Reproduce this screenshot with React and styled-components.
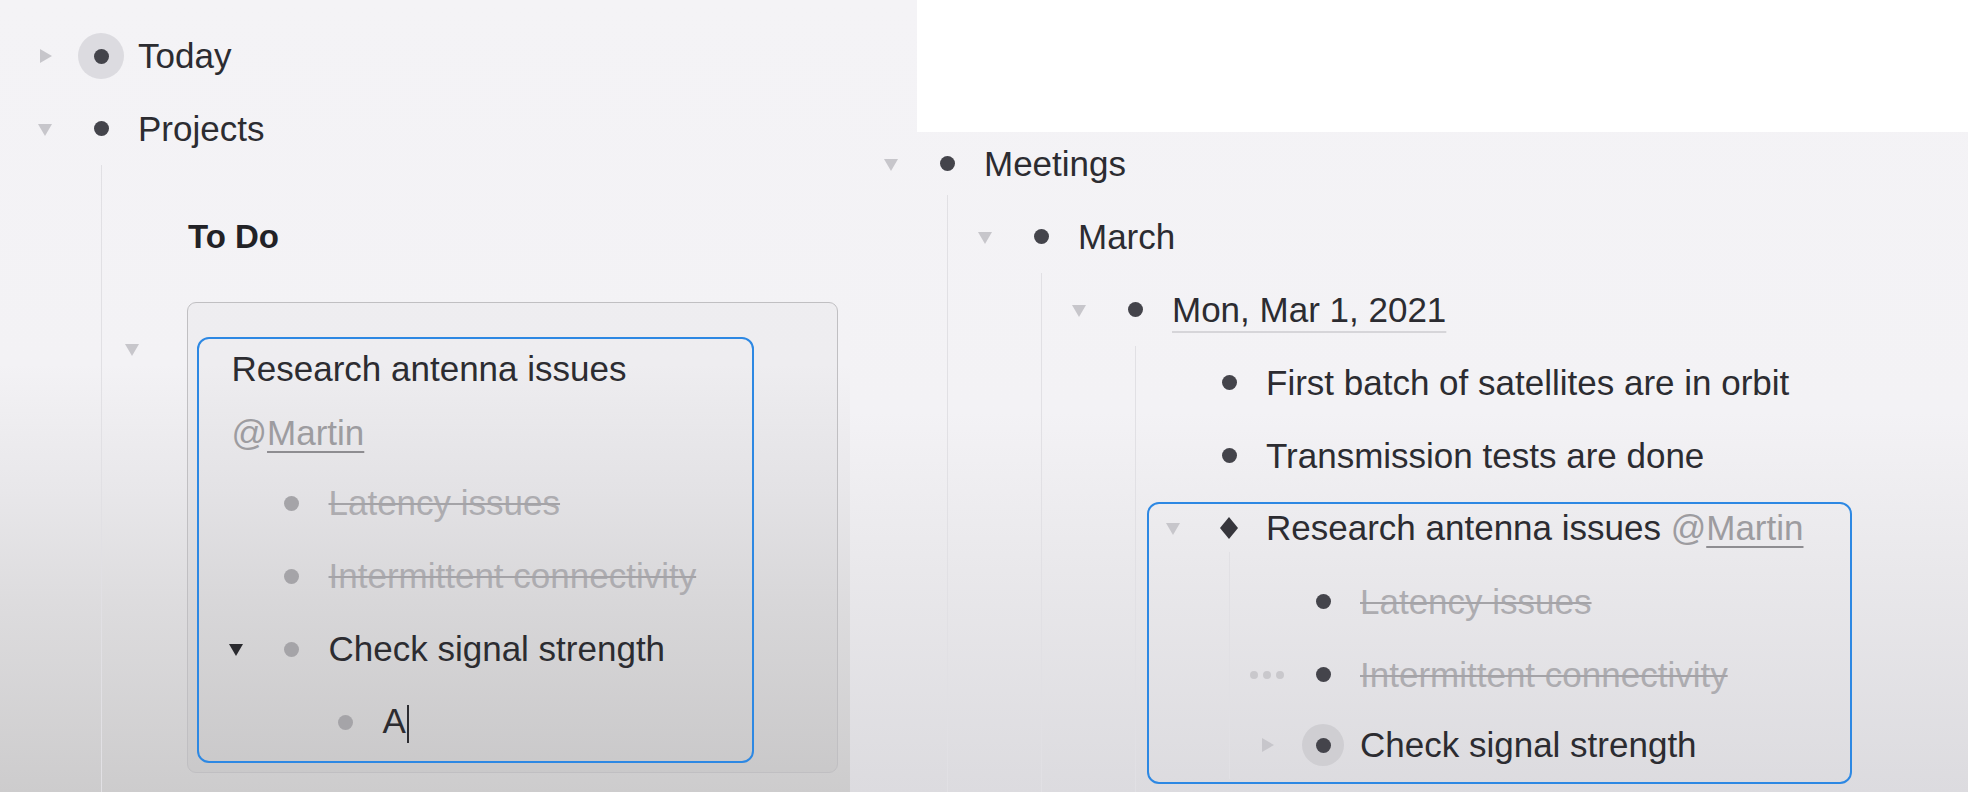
import React from 'react';
import styled, { createGlobalStyle } from 'styled-components';

const GlobalStyle = createGlobalStyle`
  html, body {
    margin: 0;
    padding: 0;
    background: #f4f3f6;
  }
  body {
    font-family: "Liberation Sans", Arial, sans-serif;
    -webkit-font-smoothing: antialiased;
  }
`

const Screen = styled.div`
  display: flex;
  width: 1968px;
  height: 792px;
  overflow: hidden;
`

const LeftPane = styled.div`
  width: 850px;
  flex-shrink: 0;
  display: flex;
  flex-direction: column;
  padding: 20px 0 0 31px;
  box-sizing: border-box;
  background: linear-gradient(180deg, #f4f3f6 0%, #f3f2f5 46%, #e8e7ea 62%, #dddcde 76%, #cdcccd 100%);
`

const RightPane = styled.div`
  flex: 1;
  display: flex;
  flex-direction: column;
  background: linear-gradient(180deg, #f4f3f6 0%, #f3f2f5 52%, #e9e8eb 72%, #dcdbdf 100%);
`

const WhiteBlock = styled.div`
  margin-left: 67px;
  height: 132px;
  flex-shrink: 0;
  background: #ffffff;
`

const Outline = styled.div`
  flex: 1;
  display: flex;
  flex-direction: column;
  padding-left: ${p => p.$x}px;
`

const Row = styled.div`
  display: flex;
  align-items: center;
  height: ${p => p.$h || 73}px;
  padding-left: ${p => p.$pl || 0}px;
  flex-shrink: 0;
`

const ToggleSlot = styled.div`
  width: 28px;
  height: 28px;
  display: flex;
  align-items: center;
  justify-content: center;
  flex-shrink: 0;
`

const BulletSlot = styled.div`
  width: 28px;
  height: 28px;
  margin-left: 28px;
  display: flex;
  align-items: center;
  justify-content: center;
  flex-shrink: 0;
  position: relative;
`

const Dot = styled.span`
  width: 15px;
  height: 15px;
  border-radius: 50%;
  background: ${p => p.$color || '#44444b'};
  position: relative;
`

const Halo = styled.span`
  position: absolute;
  left: 50%;
  top: 50%;
  width: ${p => p.$size || 46}px;
  height: ${p => p.$size || 46}px;
  transform: translate(-50%, -50%);
  border-radius: 50%;
  background: ${p => p.$color || '#dcdbe0'};
`

const Label = styled.span`
  margin-left: 23px;
  font-size: 35px;
  line-height: 40px;
  white-space: nowrap;
  color: ${p => (p.$done ? '#adacb0' : '#2c2c31')};
  text-decoration: ${p => (p.$done ? 'line-through' : 'none')};
  text-decoration-color: #a4a3a7;
  text-decoration-thickness: 2px;
`

const DateTag = styled.span`
  text-decoration: underline;
  text-decoration-color: #d6d5d9;
  text-decoration-thickness: 2px;
  text-underline-offset: 9px;
`

const Mention = styled.span`
  color: #9d9ca0;
`

const MentionName = styled.span`
  text-decoration: underline;
  text-decoration-color: #8e8d91;
  text-decoration-thickness: 2px;
  text-underline-offset: 6px;
`

const Children = styled.div`
  margin-left: 70px;
  border-left: 1px solid #e1e0e4;
  padding-left: ${p => (p.$pl !== undefined ? p.$pl : 23)}px;
  padding-top: ${p => p.$pt || 0}px;
  padding-bottom: ${p => p.$pb || 0}px;
  display: flex;
  flex-direction: column;
  flex: ${p => (p.$grow ? 1 : 'none')};
`

const BoardTitle = styled.div`
  padding: 52px 0 0 70px;
  height: 40px;
  line-height: 40px;
  font-size: 33px;
  font-weight: 700;
  color: #222226;
`

const CardRow = styled.div`
  display: flex;
  align-items: flex-start;
  margin-top: 45px;
`

const CardToggle = styled(ToggleSlot)`
  margin-top: 33px;
`

const Card = styled.div`
  margin-left: 41px;
  width: 651px;
  height: 471px;
  box-sizing: border-box;
  border: 1.5px solid #c0bfc2;
  border-radius: 9px;
  background: rgba(0, 0, 0, 0.018);
  padding: 33.5px 0 0 8.5px;
`

const FocusBox = styled.div`
  box-sizing: border-box;
  width: ${p => p.$w}px;
  height: ${p => p.$h}px;
  border: 2px solid #2d88e3;
  border-radius: 12px;
  margin-left: ${p => p.$ml || 0}px;
  margin-top: ${p => p.$mt || 0}px;
  padding-left: ${p => p.$pl || 0}px;
  display: flex;
  flex-direction: column;
`

const CardLine = styled.div`
  height: ${p => p.$h}px;
  display: flex;
  align-items: center;
  padding-left: 33px;
  font-size: 35px;
  color: #2c2c31;
  white-space: nowrap;
`

const Caret = styled.span`
  display: inline-block;
  width: 2px;
  height: 38px;
  margin-left: 1px;
  background: #2c2c31;
  vertical-align: middle;
`

const Handle = styled.span`
  display: flex;
  gap: 5px;
  span {
    width: 8px;
    height: 8px;
    border-radius: 50%;
    background: #c9c8cc;
  }
`

const Triangle = ({ dir = 'down', color = '#c7c6cb' }) => (
  <svg width="18" height="18" viewBox="0 0 18 18">
    {dir === 'down' ? (
      <path d="M2 4 L16 4 L9 16 Z" fill={color} />
    ) : (
      <path d="M4 2 L16 9 L4 16 Z" fill={color} />
    )}
  </svg>
)

const Diamond = () => (
  <svg width="20" height="24" viewBox="0 0 20 24">
    <path d="M10 1 L19 12 L10 23 L1 12 Z" fill="#36363c" />
  </svg>
)

const Item = ({ toggle, bullet = 'dot', bulletColor, halo, text, done, h, pl, children }) => (
  <Row $h={h} $pl={pl}>
    <ToggleSlot>{toggle}</ToggleSlot>
    <BulletSlot>
      {halo && <Halo $size={halo.size} $color={halo.color} />}
      {bullet === 'diamond' ? <Diamond /> : <Dot $color={bulletColor} />}
    </BulletSlot>
    <Label $done={done}>{children || text}</Label>
  </Row>
)

export default function App() {
  return (
    <>
      <GlobalStyle />
      <Screen>
        <LeftPane>
          <Item h={72} toggle={<Triangle dir="right" />} halo={{ size: 46 }} text="Today" />
          <Item toggle={<Triangle />} text="Projects" />
          <Children $pl={16} $grow>
            <BoardTitle>To Do</BoardTitle>
            <CardRow>
              <CardToggle>
                <Triangle />
              </CardToggle>
              <Card>
                <FocusBox $w={557} $h={426}>
                  <CardLine $h={60}>Research antenna issues</CardLine>
                  <CardLine $h={68}>
                    <Mention>
                      @<MentionName>Martin</MentionName>
                    </Mention>
                  </CardLine>
                  <Item pl={23} bulletColor="#a5a4a8" done text="Latency issues" />
                  <Item pl={23} bulletColor="#a5a4a8" done text="Intermittent connectivity" />
                  <Item
                    pl={23}
                    toggle={<Triangle color="#2a2a2f" />}
                    bulletColor="#a5a4a8"
                    text="Check signal strength"
                  />
                  <Item pl={77} bulletColor="#a5a4a8">
                    A<Caret />
                  </Item>
                </FocusBox>
              </Card>
            </CardRow>
          </Children>
        </LeftPane>

        <RightPane>
          <WhiteBlock />
          <Outline $x={27}>
            <Item h={63} toggle={<Triangle />} text="Meetings" />
            <Children $pt={5} $grow>
              <Item toggle={<Triangle />} text="March" />
              <Children $grow>
                <Item toggle={<Triangle />}>
                  <DateTag>Mon, Mar 1, 2021</DateTag>
                </Item>
                <Children $grow $pb={20}>
                  <Item text="First batch of satellites are in orbit" />
                  <Item text="Transmission tests are done" />
                  <FocusBox $w={705} $h={282} $ml={-12} $mt={10} $pl={10}>
                    <Item h={48} toggle={<Triangle />} bullet="diamond">
                      Research antenna issues{' '}
                      <Mention>
                        @<MentionName>Martin</MentionName>
                      </Mention>
                    </Item>
                    <Children $pt={13}>
                      <Item done text="Latency issues" />
                      <Item
                        done
                        toggle={
                          <Handle>
                            <span />
                            <span />
                            <span />
                          </Handle>
                        }
                        text="Intermittent connectivity"
                      />
                      <Item
                        h={68}
                        toggle={<Triangle dir="right" />}
                        halo={{ size: 42, color: '#cfced2' }}
                        text="Check signal strength"
                      />
                    </Children>
                  </FocusBox>
                </Children>
              </Children>
            </Children>
          </Outline>
        </RightPane>
      </Screen>
    </>
  );
}
